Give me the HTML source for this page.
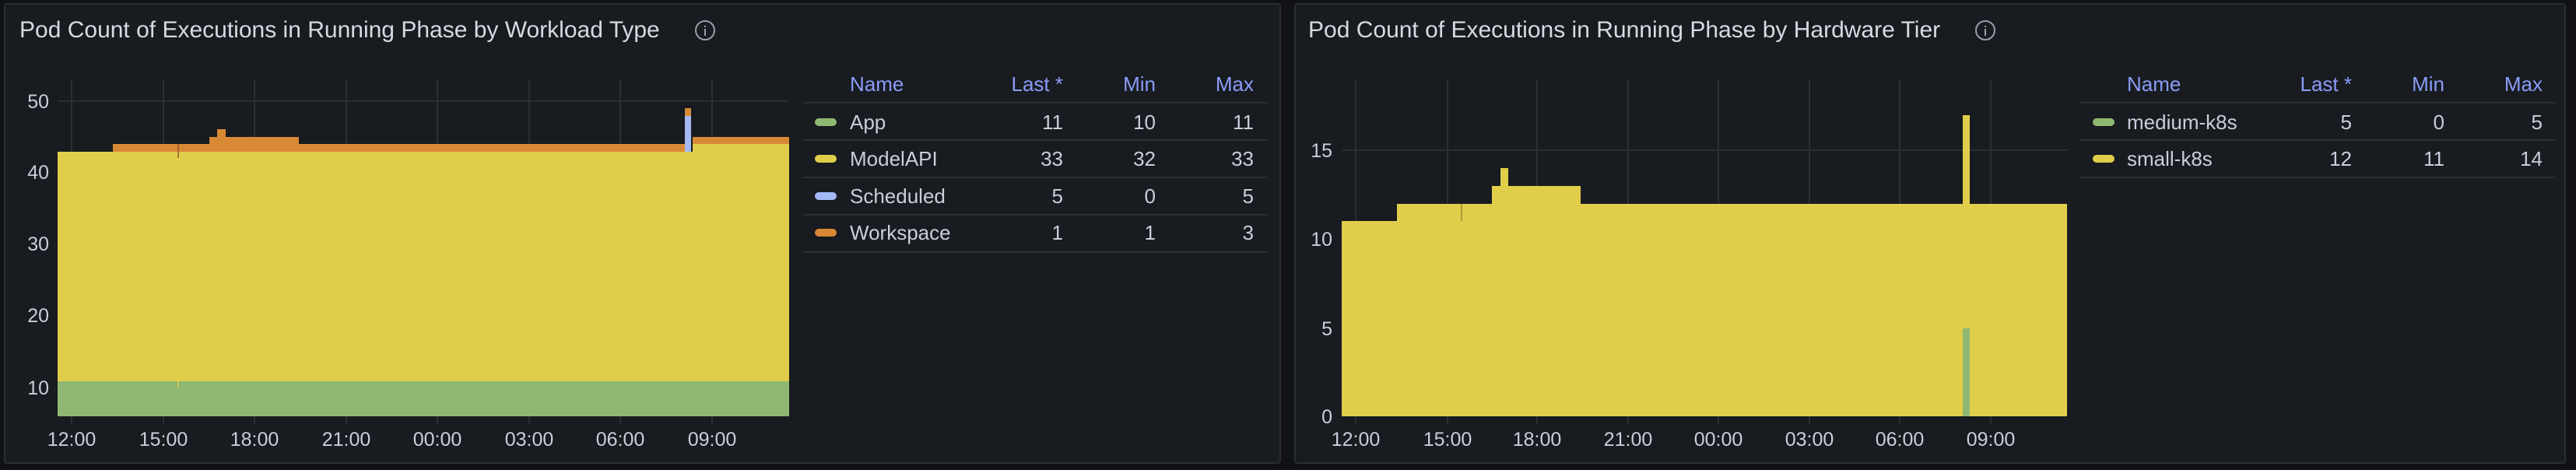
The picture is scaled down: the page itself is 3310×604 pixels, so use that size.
<!DOCTYPE html>
<html><head><meta charset="utf-8"><style>
*{margin:0;padding:0;box-sizing:border-box}
body{width:3310px;height:604px;background:#111217;position:relative;overflow:hidden;font-family:"Liberation Sans",sans-serif;color:#ccccdc}
.panel{position:absolute;top:4px;height:592px;background:#181b1f;border:2px solid #2a2d34;border-radius:4px}
.title{position:absolute;top:21px;font-size:30px;color:#d8d9e3;white-space:nowrap;line-height:36px}
.info{position:absolute;top:26px;width:26px;height:26px;border:2px solid #9a9cab;border-radius:50%;}
.info:before{content:"";position:absolute;left:10px;top:5px;width:2px;height:2px;background:#9a9cab}
.info:after{content:"";position:absolute;left:10px;top:9px;width:2px;height:9px;background:#9a9cab}
.t{position:absolute;font-size:26px;line-height:30px;white-space:nowrap}
.h{color:#8a9cf8}
.r{text-align:right}
.line{position:absolute;height:2px;background:#2c2f36}
.sw{position:absolute;width:28px;height:10px;border-radius:5px}
svg{position:absolute;left:0;top:0}
</style></head><body>
<div class="panel" style="left:5px;width:1641px"></div>
<div class="panel" style="left:1663px;width:1634px"></div>
<div class="title" style="left:25px">Pod Count of Executions in Running Phase by Workload Type</div>
<div class="info" style="left:893px"></div>
<div class="title" style="left:1681px">Pod Count of Executions in Running Phase by Hardware Tier</div>
<div class="info" style="left:2538px"></div>

<svg width="3310" height="604" font-family="Liberation Sans, sans-serif" font-size="25" fill="#ccccdc">
<g stroke="#2b2e35" stroke-width="2">
<line x1="74" y1="130" x2="1014" y2="130"/>
<line x1="92" y1="102" x2="92" y2="545"/><line x1="210" y1="102" x2="210" y2="545"/><line x1="327" y1="102" x2="327" y2="545"/><line x1="445" y1="102" x2="445" y2="545"/><line x1="562" y1="102" x2="562" y2="545"/><line x1="680" y1="102" x2="680" y2="545"/><line x1="797" y1="102" x2="797" y2="545"/><line x1="915" y1="102" x2="915" y2="545"/>
<line x1="1724" y1="193" x2="2656" y2="193"/>
<line x1="1742" y1="102" x2="1742" y2="545"/><line x1="1860" y1="102" x2="1860" y2="545"/><line x1="1975" y1="102" x2="1975" y2="545"/><line x1="2092" y1="102" x2="2092" y2="545"/><line x1="2208" y1="102" x2="2208" y2="545"/><line x1="2325" y1="102" x2="2325" y2="545"/><line x1="2441" y1="102" x2="2441" y2="545"/><line x1="2558" y1="102" x2="2558" y2="545"/>
</g>
<!-- left chart -->
<path fill="#e0ce4b" d="M74 195H880V195H890V185H1014V490H74Z"/>
<path fill="#d98835" d="M145 185H269V176H279V166H290V176H384V185H880V195H145Z"/>
<path fill="#d98835" d="M890 176H1014V185H890Z"/>
<rect x="880" y="139" width="8" height="10" fill="#d98835"/>
<rect x="880" y="149" width="8" height="46" fill="#a3b9f5"/>
<rect x="74" y="490" width="940" height="45" fill="#8fb872"/>
<line x1="229" y1="185" x2="229" y2="203" stroke="#a0522d" stroke-width="1.5"/>
<line x1="229" y1="490" x2="229" y2="498" stroke="#e0ce4b" stroke-width="1.5"/>
<g text-anchor="end"><text x="63" y="139">50</text><text x="63" y="230">40</text><text x="63" y="322">30</text><text x="63" y="414">20</text><text x="63" y="507">10</text></g>
<g text-anchor="middle"><text x="92" y="573">12:00</text><text x="210" y="573">15:00</text><text x="327" y="573">18:00</text><text x="445" y="573">21:00</text><text x="562" y="573">00:00</text><text x="680" y="573">03:00</text><text x="797" y="573">06:00</text><text x="915" y="573">09:00</text></g>
<!-- right chart -->
<path fill="#e0ce4b" d="M1724 284H1795V262H1917V239H1928V216H1938V239H2031V262H2522V148H2531V262H2656V535H1724Z"/>
<line x1="1878" y1="262" x2="1878" y2="284" stroke="#a89a3a" stroke-width="2"/>
<rect x="2522" y="422" width="9" height="113" fill="#8fb872"/>
<g text-anchor="end"><text x="1712" y="202">15</text><text x="1712" y="316">10</text><text x="1712" y="431">5</text><text x="1712" y="544">0</text></g>
<g text-anchor="middle"><text x="1742" y="573">12:00</text><text x="1860" y="573">15:00</text><text x="1975" y="573">18:00</text><text x="2092" y="573">21:00</text><text x="2208" y="573">00:00</text><text x="2325" y="573">03:00</text><text x="2441" y="573">06:00</text><text x="2558" y="573">09:00</text></g>
</svg>

<!-- left legend -->
<div class="t h" style="left:1092px;top:93px">Name</div>
<div class="t h r" style="left:1266px;width:100px;top:93px">Last *</div>
<div class="t h r" style="left:1385px;width:100px;top:93px">Min</div>
<div class="t h r" style="left:1511px;width:100px;top:93px">Max</div>
<div class="line" style="left:1032px;width:596px;top:131px"></div>
<div class="line" style="left:1032px;width:596px;top:179px"></div>
<div class="line" style="left:1032px;width:596px;top:227px"></div>
<div class="line" style="left:1032px;width:596px;top:275px"></div>
<div class="line" style="left:1032px;width:596px;top:323px"></div>
<div class="sw" style="left:1047px;top:152px;background:#8fb872"></div>
<div class="sw" style="left:1047px;top:199px;background:#e0ce4b"></div>
<div class="sw" style="left:1047px;top:247px;background:#a3b9f5"></div>
<div class="sw" style="left:1047px;top:294px;background:#d98835"></div>
<div class="t" style="left:1092px;top:142px">App</div>
<div class="t" style="left:1092px;top:189px">ModelAPI</div>
<div class="t" style="left:1092px;top:237px">Scheduled</div>
<div class="t" style="left:1092px;top:284px">Workspace</div>
<div class="t r" style="left:1266px;width:100px;top:142px">11</div><div class="t r" style="left:1385px;width:100px;top:142px">10</div><div class="t r" style="left:1511px;width:100px;top:142px">11</div>
<div class="t r" style="left:1266px;width:100px;top:189px">33</div><div class="t r" style="left:1385px;width:100px;top:189px">32</div><div class="t r" style="left:1511px;width:100px;top:189px">33</div>
<div class="t r" style="left:1266px;width:100px;top:237px">5</div><div class="t r" style="left:1385px;width:100px;top:237px">0</div><div class="t r" style="left:1511px;width:100px;top:237px">5</div>
<div class="t r" style="left:1266px;width:100px;top:284px">1</div><div class="t r" style="left:1385px;width:100px;top:284px">1</div><div class="t r" style="left:1511px;width:100px;top:284px">3</div>

<!-- right legend -->
<div class="t h" style="left:2733px;top:93px">Name</div>
<div class="t h r" style="left:2922px;width:100px;top:93px">Last *</div>
<div class="t h r" style="left:3041px;width:100px;top:93px">Min</div>
<div class="t h r" style="left:3167px;width:100px;top:93px">Max</div>
<div class="line" style="left:2673px;width:610px;top:131px"></div>
<div class="line" style="left:2673px;width:610px;top:179px"></div>
<div class="line" style="left:2673px;width:610px;top:227px"></div>
<div class="sw" style="left:2689px;top:152px;background:#8fb872"></div>
<div class="sw" style="left:2689px;top:199px;background:#e0ce4b"></div>
<div class="t" style="left:2733px;top:142px">medium-k8s</div>
<div class="t" style="left:2733px;top:189px">small-k8s</div>
<div class="t r" style="left:2922px;width:100px;top:142px">5</div><div class="t r" style="left:3041px;width:100px;top:142px">0</div><div class="t r" style="left:3167px;width:100px;top:142px">5</div>
<div class="t r" style="left:2922px;width:100px;top:189px">12</div><div class="t r" style="left:3041px;width:100px;top:189px">11</div><div class="t r" style="left:3167px;width:100px;top:189px">14</div>
</body></html>
